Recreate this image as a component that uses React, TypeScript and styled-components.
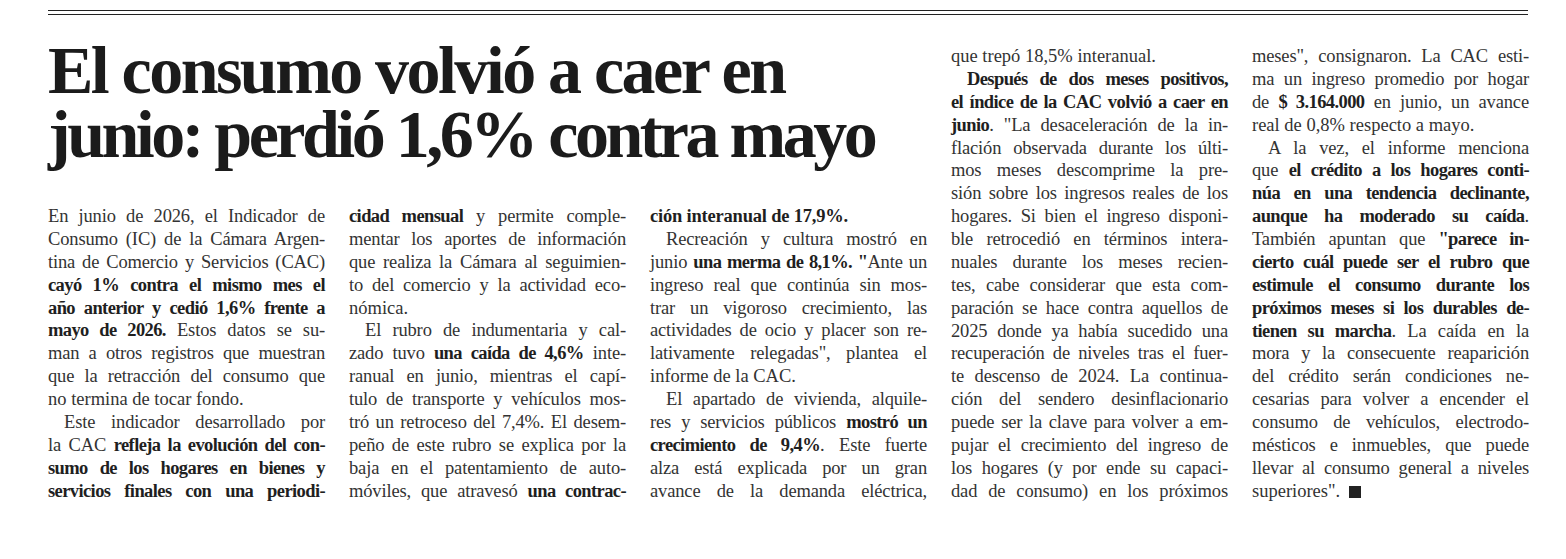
import React from 'react'
import styled, { createGlobalStyle } from 'styled-components'

type Seg = string | { b: string }
type Line = { segs: Seg[]; indent?: boolean; last?: boolean; end?: boolean }

const L = (...segs: Seg[]): Line => ({ segs })
const I = (...segs: Seg[]): Line => ({ segs, indent: true })
const E = (...segs: Seg[]): Line => ({ segs, last: true })

const columnOne: Line[] = [
  L('En junio de 2026, el Indicador de'),
  L('Consumo (IC) de la Cámara Argen-'),
  L('tina de Comercio y Servicios (CAC)'),
  L({ b: 'cayó 1% contra el mismo mes el' }),
  L({ b: 'año anterior y cedió 1,6% frente a' }),
  L({ b: 'mayo de 2026.' }, ' Estos datos se su-'),
  L('man a otros registros que muestran'),
  L('que la retracción del consumo que'),
  E('no termina de tocar fondo.'),
  I('Este indicador desarrollado por'),
  L('la CAC ', { b: 'refleja la evolución del con-' }),
  L({ b: 'sumo de los hogares en bienes y' }),
  L({ b: 'servicios finales con una periodi-' }),
]

const columnTwo: Line[] = [
  L({ b: 'cidad mensual' }, ' y permite comple-'),
  L('mentar los aportes de información'),
  L('que realiza la Cámara al seguimien-'),
  L('to del comercio y la actividad eco-'),
  E('nómica.'),
  I('El rubro de indumentaria y cal-'),
  L('zado tuvo ', { b: 'una caída de 4,6%' }, ' inte-'),
  L('ranual en junio, mientras el capí-'),
  L('tulo de transporte y vehículos mos-'),
  L('tró un retroceso del 7,4%. El desem-'),
  L('peño de este rubro se explica por la'),
  L('baja en el patentamiento de auto-'),
  L('móviles, que atravesó ', { b: 'una contrac-' }),
]

const columnThree: Line[] = [
  E({ b: 'ción interanual de 17,9%.' }),
  I('Recreación y cultura mostró en'),
  L('junio ', { b: 'una merma de 8,1%. "' }, 'Ante un'),
  L('ingreso real que continúa sin mos-'),
  L('trar un vigoroso crecimiento, las'),
  L('actividades de ocio y placer son re-'),
  L('lativamente relegadas", plantea el'),
  E('informe de la CAC.'),
  I('El apartado de vivienda, alquile-'),
  L('res y servicios públicos ', { b: 'mostró un' }),
  L({ b: 'crecimiento de 9,4%' }, '. Este fuerte'),
  L('alza está explicada por un gran'),
  L('avance de la demanda eléctrica,'),
]

const columnFour: Line[] = [
  E('que trepó 18,5% interanual.'),
  I({ b: 'Después de dos meses positivos,' }),
  L({ b: 'el índice de la CAC volvió a caer en' }),
  L({ b: 'junio' }, '. "La desaceleración de la in-'),
  L('flación observada durante los últi-'),
  L('mos meses descomprime la pre-'),
  L('sión sobre los ingresos reales de los'),
  L('hogares. Si bien el ingreso disponi-'),
  L('ble retrocedió en términos intera-'),
  L('nuales durante los meses recien-'),
  L('tes, cabe considerar que esta com-'),
  L('paración se hace contra aquellos de'),
  L('2025 donde ya había sucedido una'),
  L('recuperación de niveles tras el fuer-'),
  L('te descenso de 2024. La continua-'),
  L('ción del sendero desinflacionario'),
  L('puede ser la clave para volver a em-'),
  L('pujar el crecimiento del ingreso de'),
  L('los hogares (y por ende su capaci-'),
  L('dad de consumo) en los próximos'),
]

const columnFive: Line[] = [
  L('meses", consignaron. La CAC esti-'),
  L('ma un ingreso promedio por hogar'),
  L('de ', { b: '$ 3.164.000' }, ' en junio, un avance'),
  E('real de 0,8% respecto a mayo.'),
  I('A la vez, el informe menciona'),
  L('que ', { b: 'el crédito a los hogares conti-' }),
  L({ b: 'núa en una tendencia declinante,' }),
  L({ b: 'aunque ha moderado su caída' }, '.'),
  L('También apuntan que ', { b: '"parece in-' }),
  L({ b: 'cierto cuál puede ser el rubro que' }),
  L({ b: 'estimule el consumo durante los' }),
  L({ b: 'próximos meses si los durables de-' }),
  L({ b: 'tienen su marcha' }, '. La caída en la'),
  L('mora y la consecuente reaparición'),
  L('del crédito serán condiciones ne-'),
  L('cesarias para volver a encender el'),
  L('consumo de vehículos, electrodo-'),
  L('mésticos e inmuebles, que puede'),
  L('llevar al consumo general a niveles'),
  { segs: ['superiores". '], last: true, end: true },
]

function ColumnText({ lines }: { lines: Line[] }) {
  return (
    <>
      {lines.map((line, i) => (
        <TextLine key={i} $indent={line.indent} $last={line.last}>
          {line.segs.map((seg, j) =>
            typeof seg === 'string' ? (
              <React.Fragment key={j}>{seg}</React.Fragment>
            ) : (
              <Strong key={j} $last={line.last}>
                {seg.b}
              </Strong>
            ),
          )}
          {line.end && <EndMark />}
        </TextLine>
      ))}
    </>
  )
}

export default function App() {
  return (
    <Page>
      <GlobalStyle />
      <DoubleRule />
      <ArticleGrid>
        <Headline>
          <HeadLine $tracking={-2.55}>El consumo volvió a caer en</HeadLine>
          <HeadLine $tracking={-3.5}>junio: perdió 1,6% contra mayo</HeadLine>
        </Headline>
        <Column $col={1}>
          <ColumnText lines={columnOne} />
        </Column>
        <Column $col={2}>
          <ColumnText lines={columnTwo} />
        </Column>
        <Column $col={3}>
          <ColumnText lines={columnThree} />
        </Column>
        <SideColumn $col={4}>
          <ColumnText lines={columnFour} />
        </SideColumn>
        <SideColumn $col={5}>
          <ColumnText lines={columnFive} />
        </SideColumn>
      </ArticleGrid>
    </Page>
  )
}

const GlobalStyle = createGlobalStyle`
  html, body {
    margin: 0;
    background: #ffffff;
  }
`

const Page = styled.main`
  width: 1566px;
  height: 559px;
  box-sizing: border-box;
  padding: 10px 0 0 48px;
  font-family: 'Liberation Serif', 'Times New Roman', serif;
  color: #333333;
`

const DoubleRule = styled.div`
  width: 1480px;
  height: 3px;
  border-top: 1.5px solid #222;
  border-bottom: 1.5px solid #222;
`

const ArticleGrid = styled.div`
  display: grid;
  grid-template-columns: repeat(5, 277px);
  grid-template-rows: auto 1fr;
  column-gap: 24px;
  margin-top: 22.5px;
`

const Headline = styled.h1`
  grid-column: 1 / 4;
  grid-row: 1;
  margin: 0 0 39.6px;
  font-family: 'Liberation Serif', 'Times New Roman', serif;
  font-weight: 700;
  font-size: 68px;
  line-height: 64px;
  color: #1b1b1b;
`

const HeadLine = styled.span<{ $tracking: number }>`
  display: block;
  white-space: nowrap;
  letter-spacing: ${({ $tracking }) => $tracking}px;
`

const Column = styled.div<{ $col: number }>`
  grid-column: ${({ $col }) => $col};
  grid-row: 2;
`

const SideColumn = styled.div<{ $col: number }>`
  grid-column: ${({ $col }) => $col};
  grid-row: 1 / 3;
  padding-top: 7.5px;
`

const TextLine = styled.div<{ $indent?: boolean; $last?: boolean }>`
  font-size: 18.5px;
  line-height: 22.87px;
  letter-spacing: ${({ $last }) => ($last ? '0' : '-0.15px')};
  word-spacing: ${({ $last }) => ($last ? '0' : '-2px')};
  white-space: nowrap;
  text-align: justify;
  text-align-last: ${({ $last }) => ($last ? 'left' : 'justify')};
  text-indent: ${({ $indent }) => ($indent ? '16px' : '0')};
`

const Strong = styled.strong<{ $last?: boolean }>`
  font-weight: 700;
  letter-spacing: ${({ $last }) => ($last ? '-0.2px' : '-0.6px')};
  color: #1f1f1f;
`

const EndMark = styled.span`
  display: inline-block;
  width: 12px;
  height: 12px;
  margin-left: 4px;
  background: #222;
  vertical-align: -1px;
`
